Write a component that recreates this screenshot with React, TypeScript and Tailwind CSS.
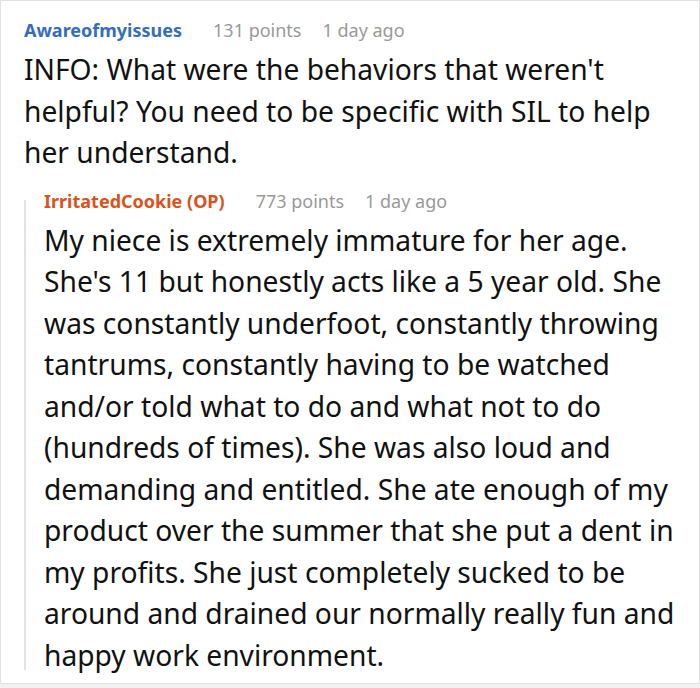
import React from 'react';

const font = { fontFamily: '"Noto Sans", "Open Sans", sans-serif' };

const Meta: React.FC<{ name: string; color: string; points: string; time: string }> = ({ name, color, points, time }) => (
  <div className="flex h-[22px] items-center text-[18px] leading-[22px]">
    <span className={`font-bold ${color}`}>{name}</span>
    <span className="ml-[31px] text-[#999999]">{points}</span>
    <span className="ml-[21px] text-[#999999]">{time}</span>
  </div>
);

const App: React.FC = () => {
  return (
    <div className="h-[688px] w-[700px] bg-white" style={font}>
      <div className="h-[684px] border border-[#e2e2e2] pl-[23px] pr-4 pt-[18px]">
        <Meta name="Awareofmyissues" color="text-[#336dbb]" points="131 points" time="1 day ago" />
        <p className="mt-2 text-[28.2px] leading-[41.5px] text-[#111111]">
          INFO: What were the behaviors that weren't helpful? You need to be specific with SIL to help her understand.
        </p>

        <div className="mt-4 flex">
          <div className="mb-[6px] mt-[10px] w-[2px] shrink-0 bg-[#e4e4e4]" />
          <div className="pl-[18px]">
            <Meta name="IrritatedCookie (OP)" color="text-[#d7541c]" points="773 points" time="1 day ago" />
            <p className="mt-2 text-[28.2px] leading-[41.5px] text-[#111111]">
              My niece is extremely immature for her age. She's 11 but honestly acts like a 5 year old. She was constantly underfoot, constantly throwing tantrums, constantly having to be watched and/or told what to do and what not to do (hundreds of times). She was also loud and demanding and entitled. She ate enough of my product over the summer that she put a dent in my profits. She just completely sucked to be around and drained our normally really fun and happy work environment.
            </p>
          </div>
        </div>
      </div>
      <div className="h-[4px] bg-[#f2f2f2]" />
    </div>
  );
};

export default App;
